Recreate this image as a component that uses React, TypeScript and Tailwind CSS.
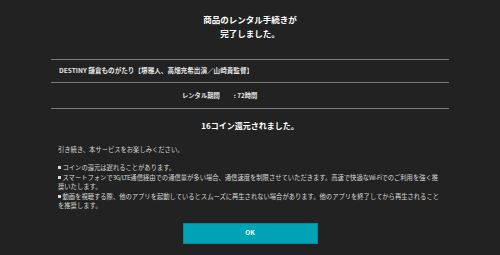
import React from "react";

const font = { fontFamily: '"Noto Sans CJK JP", "Noto Sans", sans-serif' };

function Bullet() {
  return <span className="inline-block w-[3px] h-[3px] bg-[#d8d8d8] mr-[1.5px] align-middle relative top-[-0.5px]" />;
}

function Latin({ children }: { children: React.ReactNode }) {
  return <span className="tracking-[-0.45px]">{children}</span>;
}

export default function App() {
  return (
    <div className="w-[500px] h-[255px] bg-[#222222] overflow-hidden" style={font}>
      <div className="w-[398px] mx-auto flex flex-col">
        <div className="pt-[12px] text-center text-white font-bold text-[8.5px] leading-[14px]">
          <div>商品のレンタル手続きが</div>
          <div>完了しました。</div>
        </div>
        <div className="mt-[19px] border-t border-[#7a7a7a] h-[23px] flex items-center px-[8px] text-[6.6px] font-bold text-[#e6e6e6]">
          DESTINY 鎌倉ものがたり【堺雅人、高畑充希出演／山崎貴監督】
        </div>
        <div className="border-t border-[#7a7a7a] h-[26px] flex items-center pl-[131px] text-[6.3px] font-bold text-[#e6e6e6]">
          <span>レンタル期間</span>
          <span className="ml-[14px]">: 72時間</span>
        </div>
        <div className="border-t border-[#7a7a7a]" />
        <div className="mt-[10px] text-center text-white font-bold text-[8px] leading-[14px]">
          16コイン還元されました。
        </div>
        <div className="mt-[12px] pl-[7px] pr-[7px] text-[6.3px] leading-[9.5px] text-[#d8d8d8]">
          <p>引き続き、本サービスをお楽しみください。</p>
          <div className="mt-[8.5px]">
            <p><Bullet />コインの還元は遅れることがあります。</p>
            <p><Bullet />スマートフォンで<Latin>3G/LTE</Latin>通信経由での通信量が多い場合、通信速度を制限させていただきます。高速で快適な<Latin>Wi-Fi</Latin>でのご利用を強く推奨いたします。</p>
            <p><Bullet />動画を視聴する際、他のアプリを起動しているとスムーズに再生されない場合があります。他のアプリを終了してから再生されることを推奨します。</p>
          </div>
        </div>
        <div className="mt-[12px] flex justify-center">
          <button className="w-[135px] h-[21px] bg-[#00a3b6] border border-[#0b8796] text-white font-bold text-[6.5px] flex items-center justify-center">
            OK
          </button>
        </div>
      </div>
    </div>
  );
}
